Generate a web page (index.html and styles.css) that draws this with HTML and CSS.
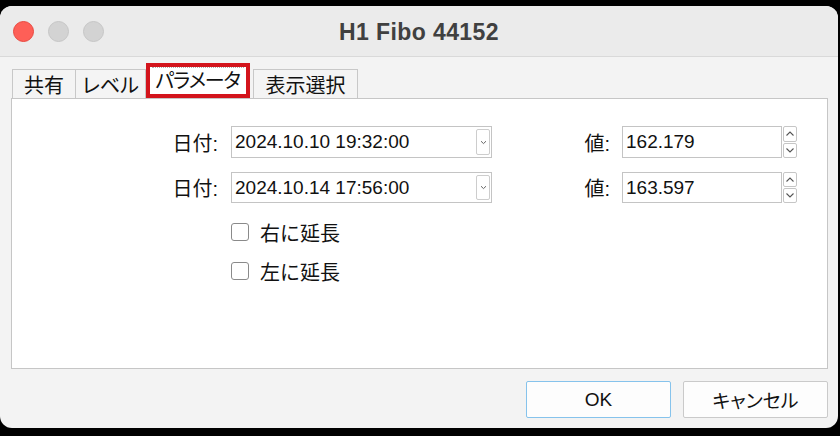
FILE: index.html
```html
<!DOCTYPE html>
<html lang="ja">
<head>
<meta charset="utf-8">
<title>H1 Fibo 44152</title>
<link rel="stylesheet" href="styles.css">
</head>
<body>
<div class="window">
  <div class="titlebar">
    <div class="lights">
      <span class="light red"></span>
      <span class="light gray"></span>
      <span class="light gray"></span>
    </div>
    <div class="title">H1 Fibo 44152</div>
    <div></div>
  </div>
  <div class="content">
    <div class="tabs">
      <div class="tab t1">共有</div>
      <div class="tab t2">レベル</div>
      <div class="tab active"><span class="focus">パラメータ</span></div>
      <div class="tab t4">表示選択</div>
    </div>
    <div class="panel">
      <div class="row">
        <label class="lbl lbl-date">日付:</label>
        <div class="field date">
          <span class="val">2024.10.10 19:32:00</span>
          <span class="drop"><svg width="7" height="5" viewBox="0 0 7 5"><path d="M1 1.2 L3.5 3.6 L6 1.2" fill="none" stroke="#666" stroke-width="1"/></svg></span>
        </div>
        <label class="lbl lbl-val">値:</label>
        <div class="field num"><span class="val">162.179</span></div>
        <div class="spin">
          <span class="half"><svg width="10" height="7" viewBox="0 0 10 7"><path d="M1.5 5.5 L5 2 L8.5 5.5" fill="none" stroke="#555" stroke-width="1.1"/></svg></span>
          <span class="half"><svg width="10" height="7" viewBox="0 0 10 7"><path d="M1.5 1.5 L5 5 L8.5 1.5" fill="none" stroke="#555" stroke-width="1.1"/></svg></span>
        </div>
      </div>
      <div class="row row2">
        <label class="lbl lbl-date">日付:</label>
        <div class="field date">
          <span class="val">2024.10.14 17:56:00</span>
          <span class="drop"><svg width="7" height="5" viewBox="0 0 7 5"><path d="M1 1.2 L3.5 3.6 L6 1.2" fill="none" stroke="#666" stroke-width="1"/></svg></span>
        </div>
        <label class="lbl lbl-val">値:</label>
        <div class="field num"><span class="val">163.597</span></div>
        <div class="spin">
          <span class="half"><svg width="10" height="7" viewBox="0 0 10 7"><path d="M1.5 5.5 L5 2 L8.5 5.5" fill="none" stroke="#555" stroke-width="1.1"/></svg></span>
          <span class="half"><svg width="10" height="7" viewBox="0 0 10 7"><path d="M1.5 1.5 L5 5 L8.5 1.5" fill="none" stroke="#555" stroke-width="1.1"/></svg></span>
        </div>
      </div>
      <div class="check first"><span class="box"></span><span class="ctext">右に延長</span></div>
      <div class="check"><span class="box"></span><span class="ctext">左に延長</span></div>
    </div>
    <div class="buttons">
      <div class="btn ok">OK</div>
      <div class="btn">キャンセル</div>
    </div>
  </div>
</div>
</body>
</html>
```

FILE: styles.css
```css
html, body {
  margin: 0;
  padding: 0;
  background: #000;
}
body {
  width: 840px;
  height: 436px;
  overflow: hidden;
  padding-top: 6px;
  box-sizing: border-box;
  font-family: "Liberation Sans", "Noto Sans CJK JP", sans-serif;
  color: #111;
}
.window {
  width: 838px;
  height: 422px;
  background: #f3f3f3;
  border-radius: 12px;
  overflow: hidden;
  display: flex;
  flex-direction: column;
}
.titlebar {
  height: 50px;
  border-bottom: 1px solid #d9d9d9;
  background: #ebebeb;
  display: grid;
  grid-template-columns: 1fr auto 1fr;
  align-items: center;
}
.lights {
  display: flex;
  gap: 14px;
  padding-left: 13px;
  padding-top: 1px;
}
.light {
  width: 21px;
  height: 21px;
  border-radius: 50%;
  box-sizing: border-box;
}
.light.red { background: #fe5f57; border: 1px solid #e9483f; }
.light.gray { background: #d3d3d3; border: 1px solid #c6c6c6; }
.title {
  font-family: "Liberation Sans", sans-serif;
  font-weight: bold;
  font-size: 23px;
  color: #404040;
  letter-spacing: 0.4px;
  padding-top: 2px;
}
.content {
  padding: 0 10px 0 11px;
  flex: 1;
  display: flex;
  flex-direction: column;
}
.tabs {
  height: 41px;
  display: flex;
  align-items: flex-end;
  padding-left: 1px;
}
.tab {
  height: 29px;
  box-sizing: border-box;
  border: 1px solid #c8c8c8;
  border-bottom: none;
  background: #f4f4f4;
  font-size: 20px;
  line-height: 32px;
  padding: 0;
  text-align: center;
  white-space: nowrap;
  font-feature-settings: "palt";
}
.tab.t1 { width: 64px; }
.tab.t2 { width: 71px; margin-left: -1px; }
.tab.t4 { width: 105px; margin-left: 3px; }
.tab.active {
  width: 104px;
  height: 35px;
  border: 4px solid #d3141c;
  background: #fff;
  padding: 0;
  line-height: 27px;
  letter-spacing: -1.2px;
}
.focus {
  display: inline-block;
  border-top: 1px dotted #b0b0b0;
  padding: 0 4px 0 3px;
  line-height: 26px;
}
.panel {
  height: 271px;
  box-sizing: border-box;
  border: 1px solid #c6c6c6;
  background: #fff;
  padding-top: 27px;
}
.row {
  display: flex;
  align-items: center;
  height: 32px;
}
.row2 {
  margin-top: 14px;
  height: 31px;
}
.lbl {
  font-size: 20px;
  text-align: right;
  color: #111;
  white-space: nowrap;
}
.lbl-date {
  width: 206px;
  margin-right: 13px;
}
.lbl-val {
  width: 118px;
  margin-right: 12px;
}
.field {
  height: 100%;
  box-sizing: border-box;
  border: 1px solid #c4c4c4;
  background: #fff;
  display: flex;
  align-items: center;
  font-size: 19px;
  padding-left: 3px;
}
.field.date {
  width: 261px;
  justify-content: space-between;
  padding-right: 1px;
}
.field.num {
  width: 160px;
}
.drop {
  width: 14px;
  height: calc(100% - 4px);
  box-sizing: border-box;
  border: 1px solid #cdcdcd;
  border-radius: 2px;
  display: flex;
  align-items: center;
  justify-content: center;
}
.spin {
  width: 14px;
  height: 100%;
  margin-left: 1px;
  display: flex;
  flex-direction: column;
  gap: 1px;
}
.half {
  flex: 1;
  box-sizing: border-box;
  border: 1px solid #c6c6c6;
  border-radius: 2px;
  display: flex;
  align-items: center;
  justify-content: center;
}
.check {
  display: flex;
  align-items: center;
  margin-left: 219px;
  height: 18px;
}
.check.first {
  margin-top: 20px;
}
.check + .check {
  margin-top: 21px;
}
.box {
  width: 18px;
  height: 18px;
  box-sizing: border-box;
  border: 1px solid #8a8a8a;
  border-radius: 3px;
  background: #fff;
  margin-right: 11px;
}
.ctext {
  font-size: 20px;
}
.buttons {
  display: flex;
  justify-content: flex-end;
  gap: 12px;
  margin-top: 12px;
}
.btn {
  width: 145px;
  height: 37px;
  box-sizing: border-box;
  border: 1px solid #cacaca;
  border-radius: 2px;
  background: #fdfdfd;
  font-size: 19px;
  display: flex;
  align-items: center;
  justify-content: center;
  font-feature-settings: "palt";
}
.btn.ok {
  border-color: #86c3ec;
}
```
